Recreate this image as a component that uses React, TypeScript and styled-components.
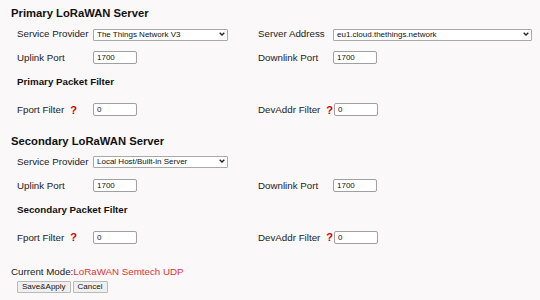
import React from "react";
import styled, { createGlobalStyle } from "styled-components";

const Global = createGlobalStyle`
  html, body { margin: 0; padding: 0; background: #faf8f8; }
  body { font-family: "Liberation Sans", Arial, sans-serif; color: #222; }
  * { box-sizing: border-box; }
`;

const Page = styled.div`
  display: flex;
  flex-direction: column;
  padding: 5px 0 0 11px;
  width: 540px;
  height: 300px;
`;

const Title = styled.div<{ $mt?: number }>`
  height: 16px;
  display: flex;
  align-items: center;
  margin-top: ${(p) => p.$mt ?? 0}px;
  font-size: 11.25px;
  font-weight: bold;
  color: #111;
`;

const Row = styled.div<{ $mt: number }>`
  display: grid;
  grid-template-columns: 76px 165px 75px 1fr;
  align-items: center;
  height: 16px;
  margin-top: ${(p) => p.$mt}px;
  padding-left: 6px;
  font-size: 9.75px;
`;

const SubTitle = styled.div<{ $mt: number }>`
  height: 16px;
  display: flex;
  align-items: center;
  margin-top: ${(p) => p.$mt}px;
  padding-left: 6px;
  font-size: 9.75px;
  font-weight: bold;
  color: #111;
`;

const Label = styled.div`
  display: flex;
  align-items: center;
  white-space: nowrap;
`;

const Help = styled.span`
  color: #cc0000;
  font-weight: bold;
  font-size: 11px;
  margin-left: 6px;
`;

const SelectWrap = styled.div<{ $w: number }>`
  position: relative;
  width: ${(p) => p.$w}px;
  height: 12px;
`;

const Select = styled.select`
  appearance: none;
  -webkit-appearance: none;
  width: 100%;
  height: 12px;
  margin: 0;
  padding: 0 0 0 3px;
  border: 1px solid #a9a9a9;
  border-radius: 1px;
  background: #fff;
  font-family: "Liberation Sans", Arial, sans-serif;
  font-size: 8px;
  line-height: 10px;
  color: #111;
  outline: none;
`;

const Chevron = styled.svg`
  position: absolute;
  right: 3px;
  top: 4px;
  width: 6px;
  height: 4px;
  pointer-events: none;
`;

const Input = styled.input`
  width: 44px;
  height: 13px;
  margin: 0;
  padding: 0 0 0 3px;
  border: 1px solid #a0a0a0;
  border-radius: 2px;
  background: #fff;
  font-family: "Liberation Sans", Arial, sans-serif;
  font-size: 8px;
  color: #111;
  outline: none;
`;

const Mode = styled.div`
  height: 16px;
  display: flex;
  align-items: center;
  margin-top: 18px;
  font-size: 9.75px;
  color: #222;
`;

const ModeValue = styled.span`
  color: #e0333a;
`;

const Buttons = styled.div`
  display: flex;
  gap: 2px;
  margin-top: 2px;
  padding-left: 6px;
`;

const Button = styled.button`
  height: 12px;
  margin: 0;
  padding: 0 4px;
  border: 1px solid #b9b9b9;
  border-radius: 1px;
  background: #efefef;
  font-family: "Liberation Sans", Arial, sans-serif;
  font-size: 8px;
  line-height: 10px;
  color: #111;
`;

function Drop({ w, value }: { w: number; value: string }) {
  return (
    <SelectWrap $w={w}>
      <Select defaultValue={value}>
        <option>{value}</option>
      </Select>
      <Chevron viewBox="0 0 6 4">
        <path d="M0.7 0.7 L3 3 L5.3 0.7" fill="none" stroke="#222" strokeWidth="1.4" />
      </Chevron>
    </SelectWrap>
  );
}

function Section({
  title,
  mt,
  provider,
  address,
  filterTitle,
}: {
  title: string;
  mt?: number;
  provider: string;
  address?: string;
  filterTitle: string;
}) {
  return (
    <>
      <Title $mt={mt}>{title}</Title>
      <Row $mt={4.5}>
        <Label>Service Provider</Label>
        <Drop w={135} value={provider} />
        {address ? <Label>Server Address</Label> : <span />}
        {address ? <Drop w={199} value={address} /> : <span />}
      </Row>
      <Row $mt={8}>
        <Label>Uplink Port</Label>
        <div>
          <Input defaultValue="1700" />
        </div>
        <Label>Downlink Port</Label>
        <div>
          <Input defaultValue="1700" />
        </div>
      </Row>
      <SubTitle $mt={8}>{filterTitle}</SubTitle>
      <Row $mt={12}>
        <Label>
          Fport Filter<Help>?</Help>
        </Label>
        <div>
          <Input defaultValue="0" />
        </div>
        <Label>
          DevAddr Filter<Help>?</Help>
        </Label>
        <div>
          <Input defaultValue="0" style={{ marginLeft: 1 }} />
        </div>
      </Row>
    </>
  );
}

export default function App() {
  return (
    <>
      <Global />
      <Page>
        <Section
          title="Primary LoRaWAN Server"
          provider="The Things Network V3"
          address="eu1.cloud.thethings.network"
          filterTitle="Primary Packet Filter"
        />
        <Section
          title="Secondary LoRaWAN Server"
          mt={15}
          provider="Local Host/Built-in Server"
          filterTitle="Secondary Packet Filter"
        />
        <Mode>
          Current Mode:<ModeValue>LoRaWAN Semtech UDP</ModeValue>
        </Mode>
        <Buttons>
          <Button>Save&amp;Apply</Button>
          <Button>Cancel</Button>
        </Buttons>
      </Page>
    </>
  );
}
